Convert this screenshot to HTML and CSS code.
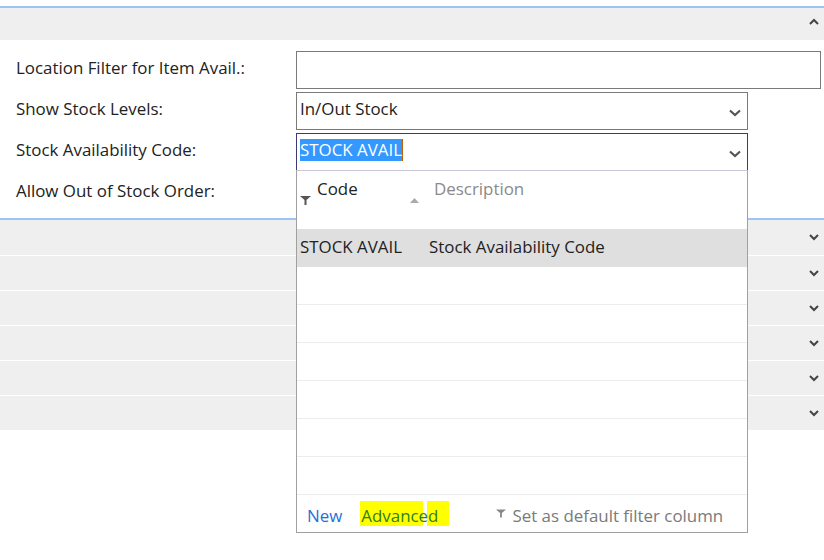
FILE: index.html
```html
<!DOCTYPE html>
<html>
<head>
<meta charset="utf-8">
<link rel="stylesheet" href="styles.css">
</head>
<body>
<div class="page">
  <div class="band band-top">
    <svg class="chev" width="10" height="7" viewBox="0 0 10 7"><path d="M1 6 L5 2 L9 6" fill="none" stroke="#444" stroke-width="2"/></svg>
  </div>
  <div class="form">
    <div class="row">
      <div class="label">Location Filter for Item Avail.:</div>
      <div class="input wide"></div>
    </div>
    <div class="row">
      <div class="label">Show Stock Levels:</div>
      <div class="input select"><span class="val">In/Out Stock</span>
        <svg class="chev" width="12" height="8" viewBox="0 0 12 8"><path d="M1 1.5 L6 6 L11 1.5" fill="none" stroke="#555" stroke-width="2.2"/></svg>
      </div>
    </div>
    <div class="row">
      <div class="label">Stock Availability Code:</div>
      <div class="input select focus"><span class="val sel">STOCK AVAIL</span>
        <svg class="chev" width="12" height="8" viewBox="0 0 12 8"><path d="M1 1.5 L6 6 L11 1.5" fill="none" stroke="#555" stroke-width="2.2"/></svg>
      </div>
    </div>
    <div class="row">
      <div class="label">Allow Out of Stock Order:</div>
    </div>
  </div>
  <div class="bands">
    <div class="band"><svg class="chev" width="10" height="7" viewBox="0 0 10 7"><path d="M1 1 L5 5 L9 1" fill="none" stroke="#444" stroke-width="2"/></svg></div>
    <div class="band"><svg class="chev" width="10" height="7" viewBox="0 0 10 7"><path d="M1 1 L5 5 L9 1" fill="none" stroke="#444" stroke-width="2"/></svg></div>
    <div class="band"><svg class="chev" width="10" height="7" viewBox="0 0 10 7"><path d="M1 1 L5 5 L9 1" fill="none" stroke="#444" stroke-width="2"/></svg></div>
    <div class="band"><svg class="chev" width="10" height="7" viewBox="0 0 10 7"><path d="M1 1 L5 5 L9 1" fill="none" stroke="#444" stroke-width="2"/></svg></div>
    <div class="band"><svg class="chev" width="10" height="7" viewBox="0 0 10 7"><path d="M1 1 L5 5 L9 1" fill="none" stroke="#444" stroke-width="2"/></svg></div>
    <div class="band"><svg class="chev" width="10" height="7" viewBox="0 0 10 7"><path d="M1 1 L5 5 L9 1" fill="none" stroke="#444" stroke-width="2"/></svg></div>
  </div>

  <div class="dropdown">
    <div class="dd-head">
      <div class="col-code">
        <svg class="funnel" width="11" height="9" viewBox="0 0 11 9"><path d="M0 0 H11 L6.5 4 V9 H4.5 V4 Z" fill="#555"/></svg>
        <span class="h-code">Code</span>
        <svg class="sort" width="9" height="5" viewBox="0 0 9 5"><path d="M0 5 L4.5 0 L9 5 Z" fill="#aaa"/></svg>
      </div>
      <div class="h-desc">Description</div>
    </div>
    <div class="dd-row active"><span class="c1">STOCK AVAIL</span><span class="c2">Stock Availability Code</span></div>
    <div class="dd-row"></div>
    <div class="dd-row"></div>
    <div class="dd-row"></div>
    <div class="dd-row"></div>
    <div class="dd-row"></div>
    <div class="dd-row"></div>
    <div class="dd-foot">
      <span class="new">New</span>
      <span class="adv"><span class="hl hl1"></span><span class="hl hl2"></span><span class="adv-t">Advanced</span></span>
      <span class="setdef"><svg width="10" height="9" viewBox="0 0 11 9"><path d="M0 0 H11 L6.5 4 V9 H4.5 V4 Z" fill="#888"/></svg>Set as default filter column</span>
    </div>
  </div>
</div>
</body>
</html>
```

FILE: styles.css
```css
* { box-sizing: border-box; }
html, body { margin: 0; padding: 0; background: #fff; }
body {
  font-family: "Open Sans", "Noto Sans", sans-serif;
  font-size: 16.9px;
  color: #222;
}
.page { position: relative; width: 824px; height: 560px; padding-top: 6px; }

.band {
  background: #efefef;
  display: flex;
  justify-content: flex-end;
  align-items: center;
  padding-right: 5px;
}
.band-top {
  height: 34px;
  border-top: 2px solid #9fc4f4;
  padding-top: 2px;
}
.band-top .chev { margin-top: -8px; }

.form { padding: 11px 0 6px 0; display: flex; flex-direction: column; gap: 3px; }
.row { height: 38px; display: flex; }
.label { width: 296px; padding-left: 16px; padding-top: 5px; line-height: 24px; white-space: nowrap; }
.input {
  border: 1px solid #7a7a7a;
  height: 38px;
  width: 452px;
  background: #fff;
}
.input.wide { width: 525px; }
.select { display: flex; align-items: center; justify-content: space-between; padding: 0 6px 4px 3px; }
.select .chev { margin-top: 7px; }
.input.focus {
  border-color: #3d3a7a;
  border-bottom-color: #b0b0c8;
}
.val { line-height: 22px; }
.val.sel { background: #3399ff; color: #fff; border-right: 1px solid #c06000; }

.bands { border-top: 2px solid #9fc4f4; display: flex; flex-direction: column; gap: 1px; }
.bands .band { height: 34px; padding-right: 5px; }
.bands .band:first-child { height: 35px; }

.dropdown {
  position: absolute;
  left: 296px;
  top: 170px;
  width: 452px;
  height: 363px;
  background: #fff;
  border: 1px solid #a0a0a0;
  border-top-color: #c8c8d8;
  display: flex;
  flex-direction: column;
}
.dd-head { height: 58px; display: flex; }
.col-code { width: 132px; position: relative; }
.funnel { position: absolute; left: 3px; top: 25px; }
.h-code { position: absolute; left: 20px; top: 7px; line-height: 22px; }
.sort { position: absolute; left: 113px; top: 27px; }
.h-desc { padding-top: 7px; line-height: 22px; color: #8a8a8a; padding-left: 5px; }
.dd-row { height: 38px; border-bottom: 1px solid #ececec; display: flex; align-items: center; }
.dd-row.active { background: #dfdfdf; border-bottom-color: #dfdfdf; padding-bottom: 2px; }
.c1 { width: 132px; padding-left: 3px; }
.dd-foot { flex: 1; display: flex; align-items: center; padding-left: 10px; padding-top: 4px; }
.new { color: #1e6fd9; }
.adv { position: relative; margin-left: 19px; color: #2d7f24; }
.adv-t { position: relative; }
.hl { position: absolute; background: #ffff00; top: -3px; height: 25px; }
.hl1 { left: -1px; width: 63px; }
.hl2 { left: 66px; width: 22px; }
.setdef { margin-left: 58px; color: #7a7a7a; display: flex; align-items: center; gap: 6px; }
.setdef svg { margin-top: -4px; }
```
